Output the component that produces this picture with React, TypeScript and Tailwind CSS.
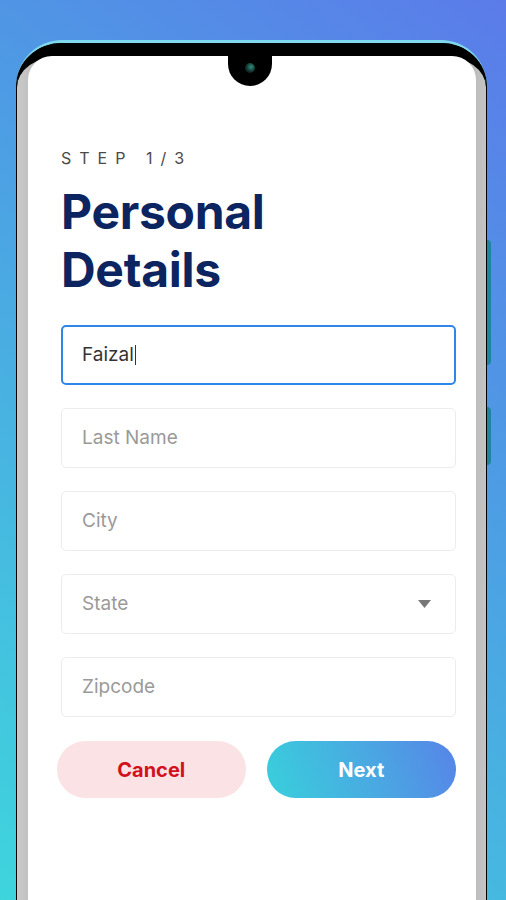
import { useState } from 'react'

const fields = [
  { placeholder: 'Last Name' },
  { placeholder: 'City' },
  { placeholder: 'State', select: true },
  { placeholder: 'Zipcode' },
]

export default function App() {
  const [first] = useState('Faizal')

  return (
    <div
      className="h-[900px] w-full overflow-hidden bg-[linear-gradient(38deg,#3ed5dd_0%,#48b2e1_38%,#4d9ce4_62%,#5b7be9_100%)] pt-[40px] pl-[16px]"
      style={{ fontFamily: 'Inter, "Noto Sans", sans-serif' }}
    >
      {/* Phone frame */}
      <div className="relative w-[471px] rounded-t-[46px] border-t-[3px] border-[#7fd9ec] bg-black px-px">
        {/* side buttons */}
        <div className="absolute top-[197px] left-[471px] h-[125px] w-[4px] rounded-r-sm bg-[#1f84a0]" />
        <div className="absolute top-[364px] left-[471px] h-[58px] w-[4px] rounded-r-sm bg-[#1f84a0]" />

        <div className="rounded-t-[44px] border-t-[13px] border-black bg-[linear-gradient(90deg,#c9c9c9_0%,#8d8d8d_20%,#858585_80%,#c4c4c4_100%)] pl-[11px] pr-[10px]">
          {/* Screen */}
          <div className="relative h-[900px] rounded-t-[24px] bg-white pl-[33px] pr-[20px] pt-[92px]">
            {/* Notch */}
            <div className="absolute top-0 left-[200px] flex h-[30px] w-[44px] items-center justify-center rounded-b-full bg-black">
              <div className="-mt-[6px] h-[10px] w-[10px] rounded-full bg-[radial-gradient(circle_at_60%_40%,#2f8f7f_0%,#12302c_55%,#050a0a_100%)]" />
            </div>

            <div className="h-[20px] text-[16px] leading-[20px] tracking-[8px] text-[#4a4a4a]">STEP 1/3</div>

            <h1 className="mt-[15px] text-[48px] font-bold leading-[58px] tracking-[-0.3px] text-[#0c2460]">
              Personal
              <br />
              Details
            </h1>

            <div className="mt-[26px] flex flex-col gap-[23px]">
              <div className="flex h-[60px] items-center rounded-[5px] border-2 border-[#2f86e8] px-[19px] text-[19px] text-[#333]">
                {first}
                <span className="ml-px h-[20px] w-[1.5px] bg-[#333]" />
              </div>
              {fields.map((f, i) => (
                <div
                  key={i}
                  className="flex h-[60px] items-center justify-between rounded-[5px] border border-[#ececec] px-[20px] text-[19px] text-[#9a9a9a]"
                >
                  {f.placeholder}
                  {f.select && (
                    <svg width="13" height="8" viewBox="0 0 13 8" className="mr-[4px]">
                      <path d="M0 0h13L6.5 8z" fill="#777" />
                    </svg>
                  )}
                </div>
              ))}
            </div>

            <div className="-ml-[4px] mt-[24px] flex gap-[21px]">
              <button className="h-[57px] w-[189px] rounded-full bg-[#fbe3e5] text-[20px] font-bold text-[#d3111c]">
                Cancel
              </button>
              <button className="h-[57px] w-[190px] rounded-full bg-[linear-gradient(70deg,#38d0dc_0%,#4aa8e2_55%,#5784e8_100%)] text-[20px] font-bold text-white">
                Next
              </button>
            </div>
          </div>
        </div>
      </div>
    </div>
  )
}
